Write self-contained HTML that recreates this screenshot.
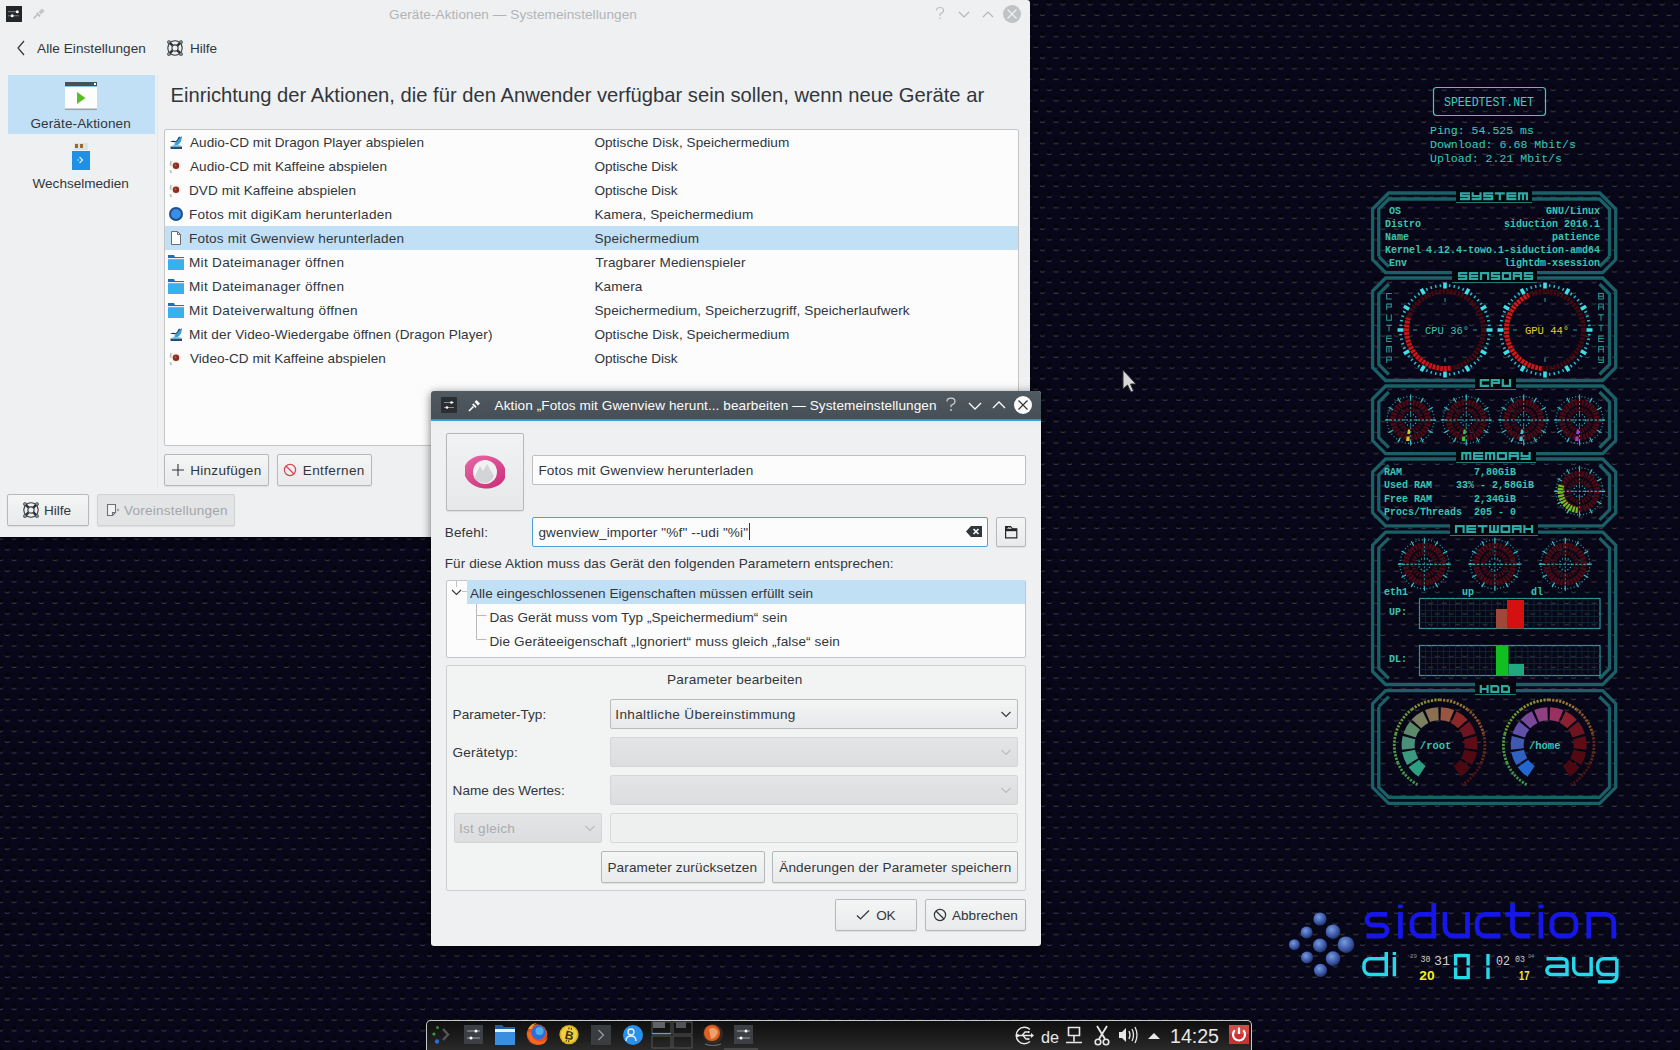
<!DOCTYPE html>
<html><head><meta charset="utf-8">
<style>
*{box-sizing:border-box;margin:0;padding:0}
html,body{width:1680px;height:1050px;overflow:hidden;background:#05051a;font-family:"Liberation Sans",sans-serif;color:#31363b}
.a{position:absolute}
.t{position:absolute;white-space:nowrap;font-size:13.57px;line-height:18px}
#bg{position:absolute;left:0;top:0}
#win{position:absolute;left:0;top:0;width:1030px;height:537px;background:#eff0f1;border-top-right-radius:3px;overflow:hidden;box-shadow:0 2px 8px rgba(0,0,0,.5)}
#dlg{position:absolute;left:431px;top:391px;width:610px;height:555px;background:#eff0f1;border-radius:3px;overflow:hidden;box-shadow:0 2px 10px rgba(0,0,0,.55)}
.btn{position:absolute;background:linear-gradient(#f4f5f5,#e9eaeb);border:1px solid #b6b8ba;border-radius:2px;box-shadow:0 1px 1px rgba(0,0,0,.08)}
.btn.dis{background:#e3e4e5;border-color:#cfd1d2}
.field{position:absolute;background:#fcfcfc;border:1px solid #bcbebf;border-radius:2px}
.combo{position:absolute;background:linear-gradient(#f3f4f4,#e8e9ea);border:1px solid #b9bbbd;border-radius:2px}
.combo.dis{background:linear-gradient(#e4e5e6,#dcddde);border-color:#d3d5d6}
.mono{font-family:"Liberation Mono",monospace}
</style></head><body>
<svg id="bg" width="1680" height="1050">
<defs>
<pattern id="pt" width="13.62" height="21.378" patternUnits="userSpaceOnUse" x="-2" y="-2.45">
<ellipse cx="2.5" cy="4.4" rx="2.7" ry="2.4" fill="#010105" opacity=".55"/>
<ellipse cx="9.31" cy="15.09" rx="2.7" ry="2.4" fill="#010105" opacity=".55"/>
<path d="M0 6.1Q2.5 7.3 5 6.1V7.1Q2.5 8.3 0 7.1Z" fill="#40404c"/>
<path d="M6.81 16.79Q9.31 17.99 11.81 16.79V17.79Q9.31 18.99 6.81 17.79Z" fill="#40404c"/>
</pattern>
</defs>
<rect width="1680" height="1050" fill="#070719"/>
<rect width="1680" height="1050" fill="url(#pt)"/>
</svg>

<!--CONKY--><svg class="a" style="left:0;top:0" width="1680" height="1050">
<rect x="1433.5" y="87.5" width="112" height="28" rx="3" fill="none" stroke="#33cfc4" stroke-width="1.2"/>
<text x="1444" y="106" font-family="Liberation Mono" font-size="12.3" fill="#3ad0c0" textLength="90" lengthAdjust="spacingAndGlyphs">SPEEDTEST.NET</text>
<text x="1430" y="133.6" font-family="Liberation Mono" font-size="11.6" fill="#36cbb9" textLength="104" lengthAdjust="spacingAndGlyphs">Ping: 54.525 ms</text>
<text x="1430" y="147.6" font-family="Liberation Mono" font-size="11.6" fill="#36cbb9" textLength="146" lengthAdjust="spacingAndGlyphs">Download: 6.68 Mbit/s</text>
<text x="1430" y="161.6" font-family="Liberation Mono" font-size="11.6" fill="#36cbb9" textLength="132" lengthAdjust="spacingAndGlyphs">Upload: 2.21 Mbit/s</text>
<path d="M1372.6 209 L1388.6 193 H1599.7 L1615.7 209 V259.6 L1602.7 272.6 H1385.6 L1372.6 259.6 Z" fill="none" stroke="#1a6066" stroke-width="3.3"/>
<path d="M1378.8 256.6 V209 L1388.8 199 H1599.5 L1609.5 209 V256.6" fill="none" stroke="#1a6066" stroke-width="3.3"/>
<path d="M1378.8 256.6 L1388.8 266.6M1609.5 256.6 L1599.5 266.6" fill="none" stroke="#1a6066" stroke-width="3.3"/>
<path d="M1372.6 291 L1385.6 278 H1602.7 L1615.7 291 V367.5 L1602.7 380.5 H1385.6 L1372.6 367.5 Z" fill="none" stroke="#1a6066" stroke-width="3.3"/>
<path d="M1388.8 284 L1378.8 294 V364.5 L1388.8 374.5M1599.5 284 L1609.5 294 V364.5 L1599.5 374.5" fill="none" stroke="#1a6066" stroke-width="3.3"/>
<path d="M1372.6 399 L1385.6 386 H1602.7 L1615.7 399 V440.6 L1602.7 453.6 H1385.6 L1372.6 440.6 Z" fill="none" stroke="#1a6066" stroke-width="3.3"/>
<path d="M1388.8 392 L1378.8 402 V437.6 L1388.8 447.6M1599.5 392 L1609.5 402 V437.6 L1599.5 447.6" fill="none" stroke="#1a6066" stroke-width="3.3"/>
<path d="M1372.6 472 L1385.6 459 H1602.7 L1615.7 472 V512.8 L1602.7 525.8 H1385.6 L1372.6 512.8 Z" fill="none" stroke="#1a6066" stroke-width="3.3"/>
<path d="M1388.8 465 L1378.8 475 V509.79999999999995 L1388.8 519.8M1599.5 465 L1609.5 475 V509.79999999999995 L1599.5 519.8" fill="none" stroke="#1a6066" stroke-width="3.3"/>
<path d="M1372.6 545.1 L1385.6 532.1 H1602.7 L1615.7 545.1 V671.5 L1602.7 684.5 H1385.6 L1372.6 671.5 Z" fill="none" stroke="#1a6066" stroke-width="3.3"/>
<path d="M1388.8 538.1 L1378.8 548.1 V668.5 L1388.8 678.5M1599.5 538.1 L1609.5 548.1 V668.5 L1599.5 678.5" fill="none" stroke="#1a6066" stroke-width="3.3"/>
<path d="M1372.6 703.7 L1385.6 690.7 H1602.7 L1615.7 703.7 V787.3 L1599.7 803.3 H1388.6 L1372.6 787.3 Z" fill="none" stroke="#1a6066" stroke-width="3.3"/>
<path d="M1378.8 706.7 V787.3 L1388.8 797.3 H1599.5 L1609.5 787.3 V706.7" fill="none" stroke="#1a6066" stroke-width="3.3"/>
<path d="M1378.8 706.7 L1388.8 696.7M1609.5 706.7 L1599.5 696.7" fill="none" stroke="#1a6066" stroke-width="3.3"/>
<rect x="1456" y="189" width="76" height="14" fill="#03070c"/>
<path d="M1456 202.5H1532" stroke="#1f7a7c" stroke-width="1"/>
<path d="M1460.0 192.2h10.0v2.2h-10.0zM1460.0 192.2h2.2v5.1h-2.2zM1460.0 195.1h10.0v2.2h-10.0zM1467.8 195.1h2.2v5.1h-2.2zM1460.0 198.0h10.0v2.2h-10.0zM1471.6 192.2h2.2v5.1h-2.2zM1479.4 192.2h2.2v8.0h-2.2zM1471.6 195.1h10.0v2.2h-10.0zM1471.6 198.0h10.0v2.2h-10.0zM1483.2 192.2h10.0v2.2h-10.0zM1483.2 192.2h2.2v5.1h-2.2zM1483.2 195.1h10.0v2.2h-10.0zM1491.0 195.1h2.2v5.1h-2.2zM1483.2 198.0h10.0v2.2h-10.0zM1494.8 192.2h10.0v2.2h-10.0zM1498.7 192.2h2.2v8.0h-2.2zM1506.4 192.2h10.0v2.2h-10.0zM1506.4 192.2h2.2v8.0h-2.2zM1506.4 195.1h10.0v2.2h-10.0zM1506.4 198.0h10.0v2.2h-10.0zM1518.0 192.2h10.0v2.2h-10.0zM1518.0 192.2h2.2v8.0h-2.2zM1521.9 192.2h2.2v8.0h-2.2zM1525.8 192.2h2.2v8.0h-2.2z" fill="#2fa8a4"/>
<rect x="1452" y="269" width="85" height="14" fill="#03070c"/>
<path d="M1452 282.5H1537" stroke="#1f7a7c" stroke-width="1"/>
<path d="M1458.0 272.0h9.3v2.2h-9.3zM1458.0 272.0h2.2v5.1h-2.2zM1458.0 274.9h9.3v2.2h-9.3zM1465.1 274.9h2.2v5.1h-2.2zM1458.0 277.8h9.3v2.2h-9.3zM1468.9 272.0h9.3v2.2h-9.3zM1468.9 272.0h2.2v8.0h-2.2zM1468.9 274.9h9.3v2.2h-9.3zM1468.9 277.8h9.3v2.2h-9.3zM1479.9 272.0h9.3v2.2h-9.3zM1479.9 272.0h2.2v8.0h-2.2zM1487.0 272.0h2.2v8.0h-2.2zM1490.8 272.0h9.3v2.2h-9.3zM1490.8 272.0h2.2v5.1h-2.2zM1490.8 274.9h9.3v2.2h-9.3zM1498.0 274.9h2.2v5.1h-2.2zM1490.8 277.8h9.3v2.2h-9.3zM1501.8 272.0h9.3v2.2h-9.3zM1501.8 272.0h2.2v8.0h-2.2zM1508.9 272.0h2.2v8.0h-2.2zM1501.8 277.8h9.3v2.2h-9.3zM1512.7 272.0h9.3v2.2h-9.3zM1512.7 272.0h2.2v8.0h-2.2zM1519.9 272.0h2.2v5.1h-2.2zM1512.7 274.9h9.3v2.2h-9.3zM1519.9 274.9h2.2v5.1h-2.2zM1523.7 272.0h9.3v2.2h-9.3zM1523.7 272.0h2.2v5.1h-2.2zM1523.7 274.9h9.3v2.2h-9.3zM1530.8 274.9h2.2v5.1h-2.2zM1523.7 277.8h9.3v2.2h-9.3z" fill="#2fa8a4"/>
<rect x="1475" y="376" width="41" height="14" fill="#03070c"/>
<path d="M1475 389.5H1516" stroke="#1f7a7c" stroke-width="1"/>
<path d="M1479.7 379.0h9.4v2.2h-9.4zM1479.7 379.0h2.2v8.0h-2.2zM1479.7 384.8h9.4v2.2h-9.4zM1490.7 379.0h9.4v2.2h-9.4zM1490.7 379.0h2.2v8.0h-2.2zM1497.9 379.0h2.2v5.1h-2.2zM1490.7 381.9h9.4v2.2h-9.4zM1501.7 379.0h2.2v8.0h-2.2zM1508.9 379.0h2.2v8.0h-2.2zM1501.7 384.8h9.4v2.2h-9.4z" fill="#2fa8a4"/>
<rect x="1456" y="449" width="80" height="14" fill="#03070c"/>
<path d="M1456 462.5H1536" stroke="#1f7a7c" stroke-width="1"/>
<path d="M1461.2 452.0h10.2v2.2h-10.2zM1461.2 452.0h2.2v8.0h-2.2zM1465.2 452.0h2.2v8.0h-2.2zM1469.2 452.0h2.2v8.0h-2.2zM1473.0 452.0h10.2v2.2h-10.2zM1473.0 452.0h2.2v8.0h-2.2zM1473.0 454.9h10.2v2.2h-10.2zM1473.0 457.8h10.2v2.2h-10.2zM1484.9 452.0h10.2v2.2h-10.2zM1484.9 452.0h2.2v8.0h-2.2zM1488.9 452.0h2.2v8.0h-2.2zM1493.0 452.0h2.2v8.0h-2.2zM1496.8 452.0h10.2v2.2h-10.2zM1496.8 452.0h2.2v8.0h-2.2zM1504.8 452.0h2.2v8.0h-2.2zM1496.8 457.8h10.2v2.2h-10.2zM1508.6 452.0h10.2v2.2h-10.2zM1508.6 452.0h2.2v8.0h-2.2zM1516.7 452.0h2.2v5.1h-2.2zM1508.6 454.9h10.2v2.2h-10.2zM1516.7 454.9h2.2v5.1h-2.2zM1520.5 452.0h2.2v5.1h-2.2zM1528.5 452.0h2.2v8.0h-2.2zM1520.5 454.9h10.2v2.2h-10.2zM1520.5 457.8h10.2v2.2h-10.2z" fill="#2fa8a4"/>
<rect x="1450" y="522" width="88" height="14" fill="#03070c"/>
<path d="M1450 535.5H1538" stroke="#1f7a7c" stroke-width="1"/>
<path d="M1454.9 525.0h9.8v2.2h-9.8zM1454.9 525.0h2.2v8.0h-2.2zM1462.5 525.0h2.2v8.0h-2.2zM1466.3 525.0h9.8v2.2h-9.8zM1466.3 525.0h2.2v8.0h-2.2zM1466.3 527.9h9.8v2.2h-9.8zM1466.3 530.8h9.8v2.2h-9.8zM1477.7 525.0h9.8v2.2h-9.8zM1481.5 525.0h2.2v8.0h-2.2zM1489.1 525.0h2.2v8.0h-2.2zM1492.9 525.0h2.2v8.0h-2.2zM1496.7 525.0h2.2v8.0h-2.2zM1489.1 530.8h9.8v2.2h-9.8zM1500.5 525.0h9.8v2.2h-9.8zM1500.5 525.0h2.2v8.0h-2.2zM1508.1 525.0h2.2v8.0h-2.2zM1500.5 530.8h9.8v2.2h-9.8zM1511.9 525.0h9.8v2.2h-9.8zM1511.9 525.0h2.2v8.0h-2.2zM1519.5 525.0h2.2v5.1h-2.2zM1511.9 527.9h9.8v2.2h-9.8zM1519.5 527.9h2.2v5.1h-2.2zM1523.3 525.0h2.2v8.0h-2.2zM1523.3 527.9h9.8v2.2h-9.8zM1530.9 525.0h2.2v5.1h-2.2zM1530.9 527.9h2.2v5.1h-2.2z" fill="#2fa8a4"/>
<rect x="1475" y="681" width="41" height="14" fill="#03070c"/>
<path d="M1475 694.5H1516" stroke="#1f7a7c" stroke-width="1"/>
<path d="M1479.7 685.0h2.2v8.0h-2.2zM1486.5 685.0h2.2v8.0h-2.2zM1479.7 687.9h9.0v2.2h-9.0zM1490.3 685.0h9.0v2.2h-9.0zM1490.3 685.0h2.2v8.0h-2.2zM1497.2 685.0h2.2v8.0h-2.2zM1490.3 690.8h9.0v2.2h-9.0zM1501.0 685.0h9.0v2.2h-9.0zM1501.0 685.0h2.2v8.0h-2.2zM1507.8 685.0h2.2v8.0h-2.2zM1501.0 690.8h9.0v2.2h-9.0z" fill="#2fa8a4"/>
<path d="M1497.2 684.8h2.4v2.4zM1507.8 684.8h2.4v2.4z" fill="#03070c"/>
<text x="1389" y="214" font-family="Liberation Mono" font-weight="bold" font-size="10" fill="#3cc4b4">OS</text>
<text x="1600" y="214" text-anchor="end" font-family="Liberation Mono" font-weight="bold" font-size="10" fill="#3cc4b4">GNU/Linux</text>
<text x="1385" y="227" font-family="Liberation Mono" font-weight="bold" font-size="10" fill="#3cc4b4">Distro</text>
<text x="1600" y="227" text-anchor="end" font-family="Liberation Mono" font-weight="bold" font-size="10" fill="#3cc4b4">siduction 2016.1</text>
<text x="1385" y="240" font-family="Liberation Mono" font-weight="bold" font-size="10" fill="#3cc4b4">Name</text>
<text x="1600" y="240" text-anchor="end" font-family="Liberation Mono" font-weight="bold" font-size="10" fill="#3cc4b4">patience</text>
<text x="1385" y="253" font-family="Liberation Mono" font-weight="bold" font-size="10" fill="#3cc4b4">Kernel</text>
<text x="1600" y="253" text-anchor="end" font-family="Liberation Mono" font-weight="bold" font-size="10" fill="#3cc4b4">4.12.4-towo.1-siduction-amd64</text>
<text x="1389" y="266" font-family="Liberation Mono" font-weight="bold" font-size="10" fill="#3cc4b4">Env</text>
<text x="1600" y="266" text-anchor="end" font-family="Liberation Mono" font-weight="bold" font-size="10" fill="#3cc4b4">lightdm-xsession</text>
<path d="M1445.0 287.0L1445.0 284.0M1449.5 287.2L1449.8 284.3M1453.9 287.9L1454.6 285.0M1458.3 289.1L1459.2 286.3M1462.5 290.7L1463.7 288.0M1466.5 292.8L1468.0 290.2M1470.3 295.2L1472.0 292.8M1473.8 298.0L1475.8 295.8M1477.0 301.2L1479.2 299.2M1479.8 304.7L1482.2 303.0M1482.2 308.5L1484.8 307.0M1484.3 312.5L1487.0 311.3M1485.9 316.7L1488.7 315.8M1487.1 321.1L1490.0 320.4M1487.8 325.5L1490.7 325.2M1488.0 330.0L1491.0 330.0M1487.8 334.5L1490.7 334.8M1487.1 338.9L1490.0 339.6M1485.9 343.3L1488.7 344.2M1484.3 347.5L1487.0 348.7M1482.2 351.5L1484.8 353.0M1479.8 355.3L1482.2 357.0M1477.0 358.8L1479.2 360.8M1473.8 362.0L1475.8 364.2M1470.3 364.8L1472.0 367.2M1466.5 367.2L1468.0 369.8M1462.5 369.3L1463.7 372.0M1458.3 370.9L1459.2 373.7M1453.9 372.1L1454.6 375.0M1449.5 372.8L1449.8 375.7M1445.0 373.0L1445.0 376.0M1440.5 372.8L1440.2 375.7M1436.1 372.1L1435.4 375.0M1431.7 370.9L1430.8 373.7M1427.5 369.3L1426.3 372.0M1423.5 367.2L1422.0 369.8M1419.7 364.8L1418.0 367.2M1416.2 362.0L1414.2 364.2M1413.0 358.8L1410.8 360.8M1410.2 355.3L1407.8 357.0M1407.8 351.5L1405.2 353.0M1405.7 347.5L1403.0 348.7M1404.1 343.3L1401.3 344.2M1402.9 338.9L1400.0 339.6M1402.2 334.5L1399.3 334.8M1402.0 330.0L1399.0 330.0M1402.2 325.5L1399.3 325.2M1402.9 321.1L1400.0 320.4M1404.1 316.7L1401.3 315.8M1405.7 312.5L1403.0 311.3M1407.8 308.5L1405.2 307.0M1410.2 304.7L1407.8 303.0M1413.0 301.2L1410.8 299.2M1416.2 298.0L1414.2 295.8M1419.7 295.2L1418.0 292.8M1423.5 292.8L1422.0 290.2M1427.5 290.7L1426.3 288.0M1431.7 289.1L1430.8 286.3M1436.1 287.9L1435.4 285.0M1440.5 287.2L1440.2 284.3" stroke="#2ab8c8" stroke-width="1.5"/>
<path d="M1445.0 288.5L1445.0 282.5M1465.8 294.1L1468.8 288.9M1480.9 309.2L1486.1 306.2M1486.5 330.0L1492.5 330.0M1480.9 350.8L1486.1 353.8M1465.8 365.9L1468.8 371.1M1445.0 371.5L1445.0 377.5M1424.2 365.9L1421.2 371.1M1409.1 350.8L1403.9 353.8M1403.5 330.0L1397.5 330.0M1409.1 309.2L1403.9 306.2M1424.2 294.1L1421.2 288.9" stroke="#3fe0e8" stroke-width="3.6"/>
<circle cx="1445" cy="330" r="38.5" fill="none" stroke="#420a10" stroke-width="5" stroke-dasharray="2.6 1.2" opacity="1"/>
<path d="M1450.4 368.1A38.5 38.5 0 0 1 1408.4 318.1" fill="none" stroke="#c81818" stroke-width="5" stroke-dasharray="2.6 1.2"/>
<path d="M1445.0 302.0L1445.0 298.0M1473.0 330.0L1477.0 330.0M1445.0 358.0L1445.0 362.0M1417.0 330.0L1413.0 330.0" stroke="#2fa0a8" stroke-width="1"/>
<text x="1447" y="334" text-anchor="middle" font-family="Liberation Mono" font-size="10.5" fill="#3cc4b4">CPU 36°</text>
<path d="M1545.0 287.0L1545.0 284.0M1549.5 287.2L1549.8 284.3M1553.9 287.9L1554.6 285.0M1558.3 289.1L1559.2 286.3M1562.5 290.7L1563.7 288.0M1566.5 292.8L1568.0 290.2M1570.3 295.2L1572.0 292.8M1573.8 298.0L1575.8 295.8M1577.0 301.2L1579.2 299.2M1579.8 304.7L1582.2 303.0M1582.2 308.5L1584.8 307.0M1584.3 312.5L1587.0 311.3M1585.9 316.7L1588.7 315.8M1587.1 321.1L1590.0 320.4M1587.8 325.5L1590.7 325.2M1588.0 330.0L1591.0 330.0M1587.8 334.5L1590.7 334.8M1587.1 338.9L1590.0 339.6M1585.9 343.3L1588.7 344.2M1584.3 347.5L1587.0 348.7M1582.2 351.5L1584.8 353.0M1579.8 355.3L1582.2 357.0M1577.0 358.8L1579.2 360.8M1573.8 362.0L1575.8 364.2M1570.3 364.8L1572.0 367.2M1566.5 367.2L1568.0 369.8M1562.5 369.3L1563.7 372.0M1558.3 370.9L1559.2 373.7M1553.9 372.1L1554.6 375.0M1549.5 372.8L1549.8 375.7M1545.0 373.0L1545.0 376.0M1540.5 372.8L1540.2 375.7M1536.1 372.1L1535.4 375.0M1531.7 370.9L1530.8 373.7M1527.5 369.3L1526.3 372.0M1523.5 367.2L1522.0 369.8M1519.7 364.8L1518.0 367.2M1516.2 362.0L1514.2 364.2M1513.0 358.8L1510.8 360.8M1510.2 355.3L1507.8 357.0M1507.8 351.5L1505.2 353.0M1505.7 347.5L1503.0 348.7M1504.1 343.3L1501.3 344.2M1502.9 338.9L1500.0 339.6M1502.2 334.5L1499.3 334.8M1502.0 330.0L1499.0 330.0M1502.2 325.5L1499.3 325.2M1502.9 321.1L1500.0 320.4M1504.1 316.7L1501.3 315.8M1505.7 312.5L1503.0 311.3M1507.8 308.5L1505.2 307.0M1510.2 304.7L1507.8 303.0M1513.0 301.2L1510.8 299.2M1516.2 298.0L1514.2 295.8M1519.7 295.2L1518.0 292.8M1523.5 292.8L1522.0 290.2M1527.5 290.7L1526.3 288.0M1531.7 289.1L1530.8 286.3M1536.1 287.9L1535.4 285.0M1540.5 287.2L1540.2 284.3" stroke="#2ab8c8" stroke-width="1.5"/>
<path d="M1545.0 288.5L1545.0 282.5M1565.8 294.1L1568.8 288.9M1580.9 309.2L1586.1 306.2M1586.5 330.0L1592.5 330.0M1580.9 350.8L1586.1 353.8M1565.8 365.9L1568.8 371.1M1545.0 371.5L1545.0 377.5M1524.2 365.9L1521.2 371.1M1509.1 350.8L1503.9 353.8M1503.5 330.0L1497.5 330.0M1509.1 309.2L1503.9 306.2M1524.2 294.1L1521.2 288.9" stroke="#3fe0e8" stroke-width="3.6"/>
<circle cx="1545" cy="330" r="38.5" fill="none" stroke="#420a10" stroke-width="5" stroke-dasharray="2.6 1.2" opacity="1"/>
<path d="M1541.6 368.4A38.5 38.5 0 0 1 1528.7 295.1" fill="none" stroke="#d81818" stroke-width="5" stroke-dasharray="2.6 1.2"/>
<path d="M1545.0 302.0L1545.0 298.0M1573.0 330.0L1577.0 330.0M1545.0 358.0L1545.0 362.0M1517.0 330.0L1513.0 330.0" stroke="#2fa0a8" stroke-width="1"/>
<text x="1547" y="334" text-anchor="middle" font-family="Liberation Mono" font-size="10.5" fill="#e8d020">GPU 44°</text>
<circle cx="1410.6" cy="420" r="23.5" fill="none" stroke="#2a9aa4" stroke-width="1.3" stroke-dasharray="1 2.2" opacity="1"/>
<path d="M1410.6 400.0L1410.6 394.5M1420.6 402.7L1423.3 397.9M1427.9 410.0L1432.7 407.2M1430.6 420.0L1436.1 420.0M1427.9 430.0L1432.7 432.8M1420.6 437.3L1423.3 442.1M1410.6 440.0L1410.6 445.5M1400.6 437.3L1397.8 442.1M1393.3 430.0L1388.5 432.8M1390.6 420.0L1385.1 420.0M1393.3 410.0L1388.5 407.2M1400.6 402.7L1397.8 397.9" stroke="#3cc0c8" stroke-width="1.2"/>
<circle cx="1410.6" cy="420" r="17.5" fill="none" stroke="#4a0a14" stroke-width="6" stroke-dasharray="2.6 0.9" opacity="1"/>
<circle cx="1410.6" cy="420" r="10.5" fill="none" stroke="#420a12" stroke-width="4.5" stroke-dasharray="2 1" opacity="1"/>
<path d="M1385.6 420H1435.6" stroke="#40c8cc" stroke-width="1.1" stroke-dasharray="2.4 1.6"/>
<path d="M1410.6 395V445" stroke="#2a9aa0" stroke-width="0.9" stroke-dasharray="2 2"/>
<circle cx="1410.6" cy="420" r="6" fill="none" stroke="#3ab8c0" stroke-width="1.3" stroke-dasharray="1 2" opacity="1"/>
<path d="M1407.1 434h3v-4.5h-2z M1406.1 441h3.5v-4.5h-3z" fill="#e0c020"/>
<circle cx="1466.3" cy="420" r="23.5" fill="none" stroke="#2a9aa4" stroke-width="1.3" stroke-dasharray="1 2.2" opacity="1"/>
<path d="M1466.3 400.0L1466.3 394.5M1476.3 402.7L1479.0 397.9M1483.6 410.0L1488.4 407.2M1486.3 420.0L1491.8 420.0M1483.6 430.0L1488.4 432.8M1476.3 437.3L1479.0 442.1M1466.3 440.0L1466.3 445.5M1456.3 437.3L1453.5 442.1M1449.0 430.0L1444.2 432.8M1446.3 420.0L1440.8 420.0M1449.0 410.0L1444.2 407.2M1456.3 402.7L1453.5 397.9" stroke="#3cc0c8" stroke-width="1.2"/>
<circle cx="1466.3" cy="420" r="17.5" fill="none" stroke="#4a0a14" stroke-width="6" stroke-dasharray="2.6 0.9" opacity="1"/>
<circle cx="1466.3" cy="420" r="10.5" fill="none" stroke="#420a12" stroke-width="4.5" stroke-dasharray="2 1" opacity="1"/>
<path d="M1441.3 420H1491.3" stroke="#40c8cc" stroke-width="1.1" stroke-dasharray="2.4 1.6"/>
<path d="M1466.3 395V445" stroke="#2a9aa0" stroke-width="0.9" stroke-dasharray="2 2"/>
<circle cx="1466.3" cy="420" r="6" fill="none" stroke="#3ab8c0" stroke-width="1.3" stroke-dasharray="1 2" opacity="1"/>
<path d="M1462.8 434h3v-4.5h-2z M1461.8 441h3.5v-4.5h-3z" fill="#40c040"/>
<circle cx="1523.7" cy="420" r="23.5" fill="none" stroke="#2a9aa4" stroke-width="1.3" stroke-dasharray="1 2.2" opacity="1"/>
<path d="M1523.7 400.0L1523.7 394.5M1533.7 402.7L1536.5 397.9M1541.0 410.0L1545.8 407.2M1543.7 420.0L1549.2 420.0M1541.0 430.0L1545.8 432.8M1533.7 437.3L1536.5 442.1M1523.7 440.0L1523.7 445.5M1513.7 437.3L1511.0 442.1M1506.4 430.0L1501.6 432.8M1503.7 420.0L1498.2 420.0M1506.4 410.0L1501.6 407.2M1513.7 402.7L1511.0 397.9" stroke="#3cc0c8" stroke-width="1.2"/>
<circle cx="1523.7" cy="420" r="17.5" fill="none" stroke="#4a0a14" stroke-width="6" stroke-dasharray="2.6 0.9" opacity="1"/>
<circle cx="1523.7" cy="420" r="10.5" fill="none" stroke="#420a12" stroke-width="4.5" stroke-dasharray="2 1" opacity="1"/>
<path d="M1498.7 420H1548.7" stroke="#40c8cc" stroke-width="1.1" stroke-dasharray="2.4 1.6"/>
<path d="M1523.7 395V445" stroke="#2a9aa0" stroke-width="0.9" stroke-dasharray="2 2"/>
<circle cx="1523.7" cy="420" r="6" fill="none" stroke="#3ab8c0" stroke-width="1.3" stroke-dasharray="1 2" opacity="1"/>
<path d="M1520.2 434h3v-4.5h-2z M1519.2 441h3.5v-4.5h-3z" fill="#40c0d0"/>
<circle cx="1579.5" cy="420" r="23.5" fill="none" stroke="#2a9aa4" stroke-width="1.3" stroke-dasharray="1 2.2" opacity="1"/>
<path d="M1579.5 400.0L1579.5 394.5M1589.5 402.7L1592.2 397.9M1596.8 410.0L1601.6 407.2M1599.5 420.0L1605.0 420.0M1596.8 430.0L1601.6 432.8M1589.5 437.3L1592.2 442.1M1579.5 440.0L1579.5 445.5M1569.5 437.3L1566.8 442.1M1562.2 430.0L1557.4 432.8M1559.5 420.0L1554.0 420.0M1562.2 410.0L1557.4 407.2M1569.5 402.7L1566.8 397.9" stroke="#3cc0c8" stroke-width="1.2"/>
<circle cx="1579.5" cy="420" r="17.5" fill="none" stroke="#4a0a14" stroke-width="6" stroke-dasharray="2.6 0.9" opacity="1"/>
<circle cx="1579.5" cy="420" r="10.5" fill="none" stroke="#420a12" stroke-width="4.5" stroke-dasharray="2 1" opacity="1"/>
<path d="M1554.5 420H1604.5" stroke="#40c8cc" stroke-width="1.1" stroke-dasharray="2.4 1.6"/>
<path d="M1579.5 395V445" stroke="#2a9aa0" stroke-width="0.9" stroke-dasharray="2 2"/>
<circle cx="1579.5" cy="420" r="6" fill="none" stroke="#3ab8c0" stroke-width="1.3" stroke-dasharray="1 2" opacity="1"/>
<path d="M1576.0 434h3v-4.5h-2z M1575.0 441h3.5v-4.5h-3z" fill="#a040d0"/>
<text x="1384" y="475.0" font-family="Liberation Mono" font-weight="bold" font-size="10" fill="#3cc4b4">RAM</text>
<text x="1474" y="475.0" font-family="Liberation Mono" font-weight="bold" font-size="10" fill="#3cc4b4">7,80GiB</text>
<text x="1384" y="488.3" font-family="Liberation Mono" font-weight="bold" font-size="10" fill="#3cc4b4">Used RAM</text>
<text x="1456" y="488.3" font-family="Liberation Mono" font-weight="bold" font-size="10" fill="#3cc4b4">33% - 2,58GiB</text>
<text x="1384" y="501.6" font-family="Liberation Mono" font-weight="bold" font-size="10" fill="#3cc4b4">Free RAM</text>
<text x="1474" y="501.6" font-family="Liberation Mono" font-weight="bold" font-size="10" fill="#3cc4b4">2,34GiB</text>
<text x="1384" y="514.9" font-family="Liberation Mono" font-weight="bold" font-size="10" fill="#3cc4b4">Procs/Threads</text>
<text x="1474" y="514.9" font-family="Liberation Mono" font-weight="bold" font-size="10" fill="#3cc4b4">205 - 0</text>
<circle cx="1579.5" cy="491.3" r="23.5" fill="none" stroke="#2a9aa4" stroke-width="1.3" stroke-dasharray="1 2.2" opacity="1"/>
<path d="M1579.5 471.3L1579.5 465.8M1589.5 474.0L1592.2 469.2M1596.8 481.3L1601.6 478.6M1599.5 491.3L1605.0 491.3M1596.8 501.3L1601.6 504.1M1589.5 508.6L1592.2 513.4M1579.5 511.3L1579.5 516.8M1569.5 508.6L1566.8 513.4M1562.2 501.3L1557.4 504.1M1559.5 491.3L1554.0 491.3M1562.2 481.3L1557.4 478.6M1569.5 474.0L1566.8 469.2" stroke="#3cc0c8" stroke-width="1.2"/>
<circle cx="1579.5" cy="491.3" r="17.5" fill="none" stroke="#4a0a14" stroke-width="6" stroke-dasharray="2.6 0.9" opacity="1"/>
<circle cx="1579.5" cy="491.3" r="10.5" fill="none" stroke="#420a12" stroke-width="4.5" stroke-dasharray="2 1" opacity="1"/>
<path d="M1554.5 491.3H1604.5" stroke="#40c8cc" stroke-width="1.1" stroke-dasharray="2.4 1.6"/>
<path d="M1579.5 466.3V516.3" stroke="#2a9aa0" stroke-width="0.9" stroke-dasharray="2 2"/>
<circle cx="1579.5" cy="491.3" r="6" fill="none" stroke="#3ab8c0" stroke-width="1.3" stroke-dasharray="1 2" opacity="1"/>
<path d="M1577.8 510.2A19 19 0 0 1 1561.6 484.8" fill="none" stroke="#70c020" stroke-width="6" stroke-dasharray="2.2 1"/>
<circle cx="1424.4" cy="564.2" r="24.5" fill="none" stroke="#2a9aa4" stroke-width="1.3" stroke-dasharray="1 2.2" opacity="1"/>
<path d="M1424.4 543.2L1424.4 537.7M1434.9 546.0L1437.7 541.3M1442.6 553.7L1447.3 551.0M1445.4 564.2L1450.9 564.2M1442.6 574.7L1447.3 577.5M1434.9 582.4L1437.7 587.1M1424.4 585.2L1424.4 590.7M1413.9 582.4L1411.2 587.1M1406.2 574.7L1401.5 577.5M1403.4 564.2L1397.9 564.2M1406.2 553.7L1401.5 551.0M1413.9 546.0L1411.2 541.3" stroke="#3cc0c8" stroke-width="1.2"/>
<circle cx="1424.4" cy="564.2" r="18.5" fill="none" stroke="#4a0a14" stroke-width="6" stroke-dasharray="2.6 0.9" opacity="1"/>
<circle cx="1424.4" cy="564.2" r="11.5" fill="none" stroke="#420a12" stroke-width="4.5" stroke-dasharray="2 1" opacity="1"/>
<path d="M1398.4 564.2H1450.4" stroke="#40c8cc" stroke-width="1.1" stroke-dasharray="2.4 1.6"/>
<path d="M1424.4 538.2V590.2" stroke="#2a9aa0" stroke-width="0.9" stroke-dasharray="2 2"/>
<circle cx="1424.4" cy="564.2" r="6" fill="none" stroke="#3ab8c0" stroke-width="1.3" stroke-dasharray="1 2" opacity="1"/>
<circle cx="1494.9" cy="564.2" r="24.5" fill="none" stroke="#2a9aa4" stroke-width="1.3" stroke-dasharray="1 2.2" opacity="1"/>
<path d="M1494.9 543.2L1494.9 537.7M1505.4 546.0L1508.2 541.3M1513.1 553.7L1517.8 551.0M1515.9 564.2L1521.4 564.2M1513.1 574.7L1517.8 577.5M1505.4 582.4L1508.2 587.1M1494.9 585.2L1494.9 590.7M1484.4 582.4L1481.7 587.1M1476.7 574.7L1472.0 577.5M1473.9 564.2L1468.4 564.2M1476.7 553.7L1472.0 551.0M1484.4 546.0L1481.7 541.3" stroke="#3cc0c8" stroke-width="1.2"/>
<circle cx="1494.9" cy="564.2" r="18.5" fill="none" stroke="#4a0a14" stroke-width="6" stroke-dasharray="2.6 0.9" opacity="1"/>
<circle cx="1494.9" cy="564.2" r="11.5" fill="none" stroke="#420a12" stroke-width="4.5" stroke-dasharray="2 1" opacity="1"/>
<path d="M1468.9 564.2H1520.9" stroke="#40c8cc" stroke-width="1.1" stroke-dasharray="2.4 1.6"/>
<path d="M1494.9 538.2V590.2" stroke="#2a9aa0" stroke-width="0.9" stroke-dasharray="2 2"/>
<circle cx="1494.9" cy="564.2" r="6" fill="none" stroke="#3ab8c0" stroke-width="1.3" stroke-dasharray="1 2" opacity="1"/>
<circle cx="1565.3" cy="564.2" r="24.5" fill="none" stroke="#2a9aa4" stroke-width="1.3" stroke-dasharray="1 2.2" opacity="1"/>
<path d="M1565.3 543.2L1565.3 537.7M1575.8 546.0L1578.5 541.3M1583.5 553.7L1588.2 551.0M1586.3 564.2L1591.8 564.2M1583.5 574.7L1588.2 577.5M1575.8 582.4L1578.5 587.1M1565.3 585.2L1565.3 590.7M1554.8 582.4L1552.0 587.1M1547.1 574.7L1542.4 577.5M1544.3 564.2L1538.8 564.2M1547.1 553.7L1542.4 551.0M1554.8 546.0L1552.0 541.3" stroke="#3cc0c8" stroke-width="1.2"/>
<circle cx="1565.3" cy="564.2" r="18.5" fill="none" stroke="#4a0a14" stroke-width="6" stroke-dasharray="2.6 0.9" opacity="1"/>
<circle cx="1565.3" cy="564.2" r="11.5" fill="none" stroke="#420a12" stroke-width="4.5" stroke-dasharray="2 1" opacity="1"/>
<path d="M1539.3 564.2H1591.3" stroke="#40c8cc" stroke-width="1.1" stroke-dasharray="2.4 1.6"/>
<path d="M1565.3 538.2V590.2" stroke="#2a9aa0" stroke-width="0.9" stroke-dasharray="2 2"/>
<circle cx="1565.3" cy="564.2" r="6" fill="none" stroke="#3ab8c0" stroke-width="1.3" stroke-dasharray="1 2" opacity="1"/>
<text x="1384" y="595" font-family="Liberation Mono" font-weight="bold" font-size="10" fill="#3cc4b4">eth1</text>
<text x="1462" y="595" font-family="Liberation Mono" font-weight="bold" font-size="10" fill="#3cc4b4">up</text>
<text x="1531" y="595" font-family="Liberation Mono" font-weight="bold" font-size="10" fill="#3cc4b4">dl</text>
<rect x="1419.5" y="598.5" width="180.5" height="30" fill="none" stroke="#2a9a9c" stroke-width="1.2"/>
<path d="M1425.5 598.5V628.5M1431.5 598.5V628.5M1437.6 598.5V628.5M1443.6 598.5V628.5M1449.6 598.5V628.5M1455.6 598.5V628.5M1461.6 598.5V628.5M1467.7 598.5V628.5M1473.7 598.5V628.5M1479.7 598.5V628.5M1485.7 598.5V628.5M1491.7 598.5V628.5M1497.8 598.5V628.5M1503.8 598.5V628.5M1509.8 598.5V628.5M1515.8 598.5V628.5M1521.8 598.5V628.5M1527.9 598.5V628.5M1533.9 598.5V628.5M1539.9 598.5V628.5M1545.9 598.5V628.5M1551.9 598.5V628.5M1558.0 598.5V628.5M1564.0 598.5V628.5M1570.0 598.5V628.5M1576.0 598.5V628.5M1582.0 598.5V628.5M1588.1 598.5V628.5M1594.1 598.5V628.5M1419.5 604.5H1600M1419.5 610.5H1600M1419.5 616.5H1600M1419.5 622.5H1600" stroke="#0f2c34" stroke-width="0.8"/>
<text x="1389" y="614.5" font-family="Liberation Mono" font-weight="bold" font-size="10" fill="#3cc4b4">UP:</text>
<rect x="1419.5" y="645.5" width="180.5" height="30" fill="none" stroke="#2a9a9c" stroke-width="1.2"/>
<path d="M1425.5 645.5V675.5M1431.5 645.5V675.5M1437.6 645.5V675.5M1443.6 645.5V675.5M1449.6 645.5V675.5M1455.6 645.5V675.5M1461.6 645.5V675.5M1467.7 645.5V675.5M1473.7 645.5V675.5M1479.7 645.5V675.5M1485.7 645.5V675.5M1491.7 645.5V675.5M1497.8 645.5V675.5M1503.8 645.5V675.5M1509.8 645.5V675.5M1515.8 645.5V675.5M1521.8 645.5V675.5M1527.9 645.5V675.5M1533.9 645.5V675.5M1539.9 645.5V675.5M1545.9 645.5V675.5M1551.9 645.5V675.5M1558.0 645.5V675.5M1564.0 645.5V675.5M1570.0 645.5V675.5M1576.0 645.5V675.5M1582.0 645.5V675.5M1588.1 645.5V675.5M1594.1 645.5V675.5M1419.5 651.5H1600M1419.5 657.5H1600M1419.5 663.5H1600M1419.5 669.5H1600" stroke="#0f2c34" stroke-width="0.8"/>
<text x="1389" y="661.5" font-family="Liberation Mono" font-weight="bold" font-size="10" fill="#3cc4b4">DL:</text>
<rect x="1496" y="609" width="11" height="19.5" fill="#a04838"/><rect x="1507" y="600" width="17" height="28.5" fill="#d41010"/>
<rect x="1496" y="646" width="12.5" height="29.5" fill="#10c020"/><rect x="1508.5" y="664" width="15.5" height="11.5" fill="#20a880"/>
<path d="M1417.6 784.8A45.3 45.3 0 0 1 1398.0 763.1" fill="none" stroke="#3a9a48" stroke-width="2.8" stroke-dasharray="2.2 1.3"/>
<path d="M1398.0 763.1A45.3 45.3 0 0 1 1395.7 733.9" fill="none" stroke="#4aa040" stroke-width="2.8" stroke-dasharray="2.2 1.3"/>
<path d="M1395.7 733.9A45.3 45.3 0 0 1 1411.9 709.4" fill="none" stroke="#6a9a38" stroke-width="2.8" stroke-dasharray="2.2 1.3"/>
<path d="M1411.9 709.4A45.3 45.3 0 0 1 1439.6 699.9" fill="none" stroke="#8a9030" stroke-width="2.8" stroke-dasharray="2.2 1.3"/>
<path d="M1439.6 699.9A45.3 45.3 0 0 1 1467.3 709.4" fill="none" stroke="#9a7a30" stroke-width="2.8" stroke-dasharray="2.2 1.3"/>
<path d="M1467.3 709.4A45.3 45.3 0 0 1 1483.5 733.9" fill="none" stroke="#8a5028" stroke-width="2.8" stroke-dasharray="2.2 1.3"/>
<path d="M1483.5 733.9A45.3 45.3 0 0 1 1481.2 763.1" fill="none" stroke="#6a2818" stroke-width="2.8" stroke-dasharray="2.2 1.3"/>
<path d="M1481.2 763.1A45.3 45.3 0 0 1 1461.6 784.8" fill="none" stroke="#501010" stroke-width="2.8" stroke-dasharray="2.2 1.3"/>
<path d="M1422.0 771.3A31.5 31.5 0 0 1 1413.9 763.4" fill="none" stroke="#2aa080" stroke-width="13"/>
<path d="M1412.7 761.6A31.5 31.5 0 0 1 1408.6 751.0" fill="none" stroke="#3a9a80" stroke-width="13"/>
<path d="M1408.3 748.9A31.5 31.5 0 0 1 1409.0 737.6" fill="none" stroke="#4a9078" stroke-width="13"/>
<path d="M1409.6 735.5A31.5 31.5 0 0 1 1415.0 725.5" fill="none" stroke="#5a8a68" stroke-width="13"/>
<path d="M1416.4 723.9A31.5 31.5 0 0 1 1425.5 717.1" fill="none" stroke="#7a8060" stroke-width="13"/>
<path d="M1427.5 716.1A31.5 31.5 0 0 1 1438.5 713.7" fill="none" stroke="#8a7050" stroke-width="13"/>
<path d="M1440.7 713.7A31.5 31.5 0 0 1 1451.7 716.1" fill="none" stroke="#9a5540" stroke-width="13"/>
<path d="M1453.7 717.1A31.5 31.5 0 0 1 1462.8 723.9" fill="none" stroke="#8a2828" stroke-width="13"/>
<path d="M1464.2 725.5A31.5 31.5 0 0 1 1469.6 735.5" fill="none" stroke="#6e1420" stroke-width="13"/>
<path d="M1470.2 737.6A31.5 31.5 0 0 1 1470.9 748.9" fill="none" stroke="#5e0c16" stroke-width="13"/>
<path d="M1470.6 751.0A31.5 31.5 0 0 1 1466.5 761.6" fill="none" stroke="#520a12" stroke-width="13"/>
<path d="M1465.3 763.4A31.5 31.5 0 0 1 1457.2 771.3" fill="none" stroke="#4a0810" stroke-width="13"/>
<text x="1435.6" y="749.2" text-anchor="middle" font-family="Liberation Mono" font-weight="bold" font-size="10.5" fill="#3cc4b4">/root</text>
<path d="M1526.7 784.8A45.3 45.3 0 0 1 1507.1 763.1" fill="none" stroke="#3a9a48" stroke-width="2.8" stroke-dasharray="2.2 1.3"/>
<path d="M1507.1 763.1A45.3 45.3 0 0 1 1504.8 733.9" fill="none" stroke="#4aa040" stroke-width="2.8" stroke-dasharray="2.2 1.3"/>
<path d="M1504.8 733.9A45.3 45.3 0 0 1 1521.0 709.4" fill="none" stroke="#6a9a38" stroke-width="2.8" stroke-dasharray="2.2 1.3"/>
<path d="M1521.0 709.4A45.3 45.3 0 0 1 1548.7 699.9" fill="none" stroke="#8a9030" stroke-width="2.8" stroke-dasharray="2.2 1.3"/>
<path d="M1548.7 699.9A45.3 45.3 0 0 1 1576.4 709.4" fill="none" stroke="#9a7a30" stroke-width="2.8" stroke-dasharray="2.2 1.3"/>
<path d="M1576.4 709.4A45.3 45.3 0 0 1 1592.6 733.9" fill="none" stroke="#8a5028" stroke-width="2.8" stroke-dasharray="2.2 1.3"/>
<path d="M1592.6 733.9A45.3 45.3 0 0 1 1590.3 763.1" fill="none" stroke="#6a2818" stroke-width="2.8" stroke-dasharray="2.2 1.3"/>
<path d="M1590.3 763.1A45.3 45.3 0 0 1 1570.7 784.8" fill="none" stroke="#501010" stroke-width="2.8" stroke-dasharray="2.2 1.3"/>
<path d="M1531.1 771.3A31.5 31.5 0 0 1 1523.0 763.4" fill="none" stroke="#2068d0" stroke-width="13"/>
<path d="M1521.8 761.6A31.5 31.5 0 0 1 1517.7 751.0" fill="none" stroke="#3060c0" stroke-width="13"/>
<path d="M1517.4 748.9A31.5 31.5 0 0 1 1518.1 737.6" fill="none" stroke="#4058b0" stroke-width="13"/>
<path d="M1518.7 735.5A31.5 31.5 0 0 1 1524.1 725.5" fill="none" stroke="#6050a8" stroke-width="13"/>
<path d="M1525.5 723.9A31.5 31.5 0 0 1 1534.6 717.1" fill="none" stroke="#7a4898" stroke-width="13"/>
<path d="M1536.6 716.1A31.5 31.5 0 0 1 1547.6 713.7" fill="none" stroke="#904080" stroke-width="13"/>
<path d="M1549.8 713.7A31.5 31.5 0 0 1 1560.8 716.1" fill="none" stroke="#9a3060" stroke-width="13"/>
<path d="M1562.8 717.1A31.5 31.5 0 0 1 1571.9 723.9" fill="none" stroke="#8a2030" stroke-width="13"/>
<path d="M1573.3 725.5A31.5 31.5 0 0 1 1578.7 735.5" fill="none" stroke="#6e1420" stroke-width="13"/>
<path d="M1579.3 737.6A31.5 31.5 0 0 1 1580.0 748.9" fill="none" stroke="#5e0c16" stroke-width="13"/>
<path d="M1579.7 751.0A31.5 31.5 0 0 1 1575.6 761.6" fill="none" stroke="#520a12" stroke-width="13"/>
<path d="M1574.4 763.4A31.5 31.5 0 0 1 1566.3 771.3" fill="none" stroke="#4a0810" stroke-width="13"/>
<text x="1544.7" y="749.2" text-anchor="middle" font-family="Liberation Mono" font-weight="bold" font-size="10.5" fill="#3cc4b4">/home</text>
<path d="M1386.2 293.0h5.6v1.0h-5.6zM1386.2 293.0h1.0v6.5h-1.0zM1386.2 298.5h5.6v1.0h-5.6z" fill="#2a9c98"/>
<path d="M1386.2 303.6h5.6v1.0h-5.6zM1386.2 303.6h1.0v6.5h-1.0zM1390.8 303.6h1.0v3.8h-1.0zM1386.2 306.4h5.6v1.0h-5.6z" fill="#2a9c98"/>
<path d="M1386.2 314.2h1.0v6.5h-1.0zM1390.8 314.2h1.0v6.5h-1.0zM1386.2 319.7h5.6v1.0h-5.6z" fill="#2a9c98"/>
<path d="M1386.2 324.8h5.6v1.0h-5.6zM1388.5 324.8h1.0v6.5h-1.0z" fill="#2a9c98"/>
<path d="M1386.2 335.4h5.6v1.0h-5.6zM1386.2 335.4h1.0v6.5h-1.0zM1386.2 338.1h5.6v1.0h-5.6zM1386.2 340.9h5.6v1.0h-5.6z" fill="#2a9c98"/>
<path d="M1386.2 346.0h5.6v1.0h-5.6zM1386.2 346.0h1.0v6.5h-1.0zM1388.5 346.0h1.0v6.5h-1.0zM1390.8 346.0h1.0v6.5h-1.0z" fill="#2a9c98"/>
<path d="M1386.2 356.6h5.6v1.0h-5.6zM1386.2 356.6h1.0v6.5h-1.0zM1390.8 356.6h1.0v3.8h-1.0zM1386.2 359.4h5.6v1.0h-5.6z" fill="#2a9c98"/>
<path d="M1598.2 293.0h5.6v1.0h-5.6zM1598.2 293.0h1.0v6.5h-1.0zM1602.8 293.0h1.0v3.8h-1.0zM1598.2 295.8h5.6v1.0h-5.6zM1602.8 295.8h1.0v3.8h-1.0zM1598.2 298.5h5.6v1.0h-5.6z" fill="#2a9c98"/>
<path d="M1598.2 303.6h5.6v1.0h-5.6zM1598.2 303.6h1.0v6.5h-1.0zM1602.8 303.6h1.0v6.5h-1.0zM1598.2 306.4h5.6v1.0h-5.6z" fill="#2a9c98"/>
<path d="M1598.2 314.2h5.6v1.0h-5.6zM1600.5 314.2h1.0v6.5h-1.0z" fill="#2a9c98"/>
<path d="M1598.2 324.8h5.6v1.0h-5.6zM1600.5 324.8h1.0v6.5h-1.0z" fill="#2a9c98"/>
<path d="M1598.2 335.4h5.6v1.0h-5.6zM1598.2 335.4h1.0v6.5h-1.0zM1598.2 338.1h5.6v1.0h-5.6zM1598.2 340.9h5.6v1.0h-5.6z" fill="#2a9c98"/>
<path d="M1598.2 346.0h5.6v1.0h-5.6zM1598.2 346.0h1.0v6.5h-1.0zM1602.8 346.0h1.0v3.8h-1.0zM1598.2 348.8h5.6v1.0h-5.6zM1602.8 348.8h1.0v3.8h-1.0z" fill="#2a9c98"/>
<path d="M1598.2 356.6h1.0v3.8h-1.0zM1602.8 356.6h1.0v6.5h-1.0zM1598.2 359.4h5.6v1.0h-5.6zM1598.2 362.1h5.6v1.0h-5.6z" fill="#2a9c98"/>

<defs><radialGradient id="ball" cx="0.4" cy="0.35" r="0.7"><stop offset="0" stop-color="#7a9ae0"/><stop offset="0.6" stop-color="#3c5aa8"/><stop offset="1" stop-color="#1c2a60"/></radialGradient></defs>
<circle cx="1320" cy="919" r="6.6" fill="url(#ball)"/>
<circle cx="1306.6" cy="932.5" r="6" fill="url(#ball)"/>
<circle cx="1333" cy="931.7" r="7.3" fill="url(#ball)"/>
<circle cx="1294.4" cy="944.7" r="5.5" fill="url(#ball)"/>
<circle cx="1320" cy="945.4" r="7" fill="url(#ball)"/>
<circle cx="1346" cy="944.7" r="8.3" fill="url(#ball)"/>
<circle cx="1307" cy="957.6" r="6" fill="url(#ball)"/>
<circle cx="1333" cy="958.6" r="7.3" fill="url(#ball)"/>
<circle cx="1320.5" cy="970.3" r="6.6" fill="url(#ball)"/>
<path d="M1387.2 914.3H1372.5A5.45 5.45 0 0 0 1372.5 925.2H1381.7A5.4 5.4 0 0 1 1381.7 936H1366.5M1400.4 911.9V938.4M1433.8 903V938.4M1433.8 914.3H1420A8 8 0 0 0 1412 922.3V928A8 8 0 0 0 1420 936H1433.8M1445 911.9V928A8 8 0 0 0 1453 936H1467.5M1467.5 911.9V938.4M1500.5 914.3H1485A8 8 0 0 0 1477.1 922.3V928A8 8 0 0 0 1485 936H1500.5M1512.5 903V928A8 8 0 0 0 1520.5 936H1530.2M1505.3 914.3H1530.2M1541 911.9V938.4M1559.9 914.3H1568A8 8 0 0 1 1576 922.3V928A8 8 0 0 1 1568 936H1559.9A8 8 0 0 1 1551.9 928V922.3A8 8 0 0 1 1559.9 914.3ZM1588.8 938.4V914.3H1605.8A8 8 0 0 1 1613.8 922.3V938.4" fill="none" stroke="#1616e8" stroke-width="4.8"/>
<rect x="1397.9" y="904.6" width="5" height="3.6" fill="#1616e8"/><rect x="1538.5" y="904.6" width="5" height="3.6" fill="#1616e8"/>
<path d="M1386.25 952V976.2M1386.25 958.65H1370A6 6 0 0 0 1364 964.65V968.45A6 6 0 0 0 1370 974.45H1386.25M1394.4 957V976.2M1546.5 958.65H1563A4 4 0 0 1 1567 962.6V976.2M1567 966.2H1551A4.1 4.1 0 0 0 1551 974.45H1567M1573.75 956.9V968.45A6 6 0 0 0 1579.75 974.45H1591.15M1591.15 956.9V976.2M1616.85 958.65H1603.75A6 6 0 0 0 1597.75 964.65V968.45A6 6 0 0 0 1603.75 974.45H1616.85M1616.85 958.65V976A5.6 5.6 0 0 1 1611.25 981.65H1598" fill="none" stroke="#26d8ea" stroke-width="3.5"/>
<rect x="1392.7" y="952" width="3.4" height="3" fill="#26d8ea"/>
<path d="M1455.6 954V965.5M1455.6 967.5V979M1468.2 954V965.5M1468.2 967.5V979M1456.5 955.5H1467.3M1456.5 977.6H1467.3M1488 954V965.5M1488 967.5V979" fill="none" stroke="#26d8ea" stroke-width="3.4"/>
<text x="1420.5" y="961.5" font-family="Liberation Mono" font-size="9" fill="#cfcfcf" textLength="10" lengthAdjust="spacingAndGlyphs">30</text>
<text x="1434" y="965" font-family="Liberation Mono" font-size="13" fill="#cfcfcf" textLength="16" lengthAdjust="spacingAndGlyphs">31</text>
<text x="1410" y="958" font-family="Liberation Mono" font-size="6" fill="#8a8a8a" textLength="7" lengthAdjust="spacingAndGlyphs">29</text>
<text x="1496" y="965" font-family="Liberation Mono" font-size="13" fill="#cfcfcf" textLength="14" lengthAdjust="spacingAndGlyphs">02</text>
<text x="1515" y="961.5" font-family="Liberation Mono" font-size="9" fill="#cfcfcf" textLength="10" lengthAdjust="spacingAndGlyphs">03</text>
<text x="1528" y="958" font-family="Liberation Mono" font-size="6" fill="#8a8a8a" textLength="6" lengthAdjust="spacingAndGlyphs">04</text>
<text x="1419.3" y="980.2" font-family="Liberation Sans" font-weight="bold" font-size="13" fill="#f0f020" textLength="15.3" lengthAdjust="spacingAndGlyphs">20</text>
<text x="1519" y="980.2" font-family="Liberation Sans" font-weight="bold" font-size="13" fill="#f0f020" textLength="10.4" lengthAdjust="spacingAndGlyphs">17</text>
<path d="M1123 370V389L1127.5 385L1131 392L1133.5 391L1130.5 384H1136Z" fill="#d8d8d8" stroke="#303030" stroke-width="1"/>

</svg><!--/CONKY-->
<!-- MAIN WINDOW -->
<div id="win">
 <!-- title bar -->
 <div class="a" style="left:6px;top:6px;width:16px;height:16px;background:#232629"></div>
 <svg class="a" style="left:6px;top:6px" width="16" height="16"><path d="M2 5.7h9M2 9.8h11" stroke="#7a8085" stroke-width="1"/><circle cx="11.3" cy="5.7" r="1.5" fill="#fff"/><circle cx="6.2" cy="9.8" r="1.5" fill="#fff"/></svg>
 <svg class="a" style="left:31px;top:6px" width="16" height="16"><path d="M2.5 12.5L6 9" stroke="#b8babc" stroke-width="1.4"/><path d="M5 7.5l3.5 3.5 1.2-1.2-3.5-3.5z" fill="#b8babc"/><path d="M7.5 6l2.5 2.5 3.5-3.5-2.5-2.5z" fill="#c4c6c8"/></svg>
 <div class="t" style="left:389.0px;top:6px;color:#b1b4b6;letter-spacing:0.078px">Geräte-Aktionen — Systemeinstellungen</div>
 <svg class="a" style="left:930px;top:4px" width="96" height="20">
  <path d="M6.5 6.5q0-3 3.5-3t3.5 3q0 2-3.5 3.5v2" stroke="#bcbec0" stroke-width="1.2" fill="none"/><circle cx="10" cy="14.5" r=".8" fill="#bcbec0"/>
  <path d="M29 8l5 5 5-5" stroke="#b4b6b8" stroke-width="1.2" fill="none"/>
  <path d="M53 13l5-5 5 5" stroke="#b4b6b8" stroke-width="1.2" fill="none"/>
  <circle cx="82" cy="10" r="9" fill="#c0c3c5"/><path d="M77.5 5.5l9 9M86.5 5.5l-9 9" stroke="#eef0f1" stroke-width="1.3"/>
 </svg>
 <!-- toolbar -->
 <svg class="a" style="left:14px;top:39px" width="14" height="18"><path d="M10 2L4 9l6 7" stroke="#31363b" stroke-width="1.2" fill="none"/></svg>
 <div class="t" style="left:37.1px;top:40px;letter-spacing:0.053px">Alle Einstellungen</div>
 <svg class="a" style="left:167px;top:40px" width="16" height="16"><circle cx="8" cy="8" r="7.2" stroke="#31363b" stroke-width="1.1" fill="none"/><circle cx="8" cy="8" r="3.1" stroke="#31363b" stroke-width="1.1" fill="none"/><path d="M2.3 2.3L5.6 5.6M13.7 2.3L10.4 5.6M2.3 13.7L5.6 10.4M13.7 13.7L10.4 10.4" stroke="#31363b" stroke-width="2.6"/><circle cx="2" cy="2" r="1.3" stroke="#31363b" stroke-width="1.1" fill="#fff"/><circle cx="14" cy="2" r="1.3" stroke="#31363b" stroke-width="1.1" fill="#fff"/><circle cx="2" cy="14" r="1.3" stroke="#31363b" stroke-width="1.1" fill="#fff"/><circle cx="14" cy="14" r="1.3" stroke="#31363b" stroke-width="1.1" fill="#fff"/></svg>
 <div class="t" style="left:190px;top:40px">Hilfe</div>
 <!-- sidebar -->
 <div class="a" style="left:8px;top:75px;width:147px;height:59px;background:#c2e0f5"></div>
 <div class="a" style="left:157px;top:75px;width:1px;height:413px;background:#e5e7e9"></div>
 <svg class="a" style="left:64px;top:80px" width="34" height="32">
  <rect x="1" y="2" width="32" height="27" fill="#fdfdfd"/>
  <rect x="1" y="2" width="32" height="4" fill="#4a5058"/><rect x="30" y="3" width="2" height="2" fill="#fff"/>
  <rect x="1" y="6" width="32" height="1" fill="#7ec8ee"/>
  <rect x="1" y="28.5" width="32" height="1.6" fill="#9aa2aa"/>
  <path d="M13 12v12l8.5-6z" fill="#56c020"/>
 </svg>
 <div class="t" style="left:30.4px;top:115px;letter-spacing:0.114px">Geräte-Aktionen</div>
 <svg class="a" style="left:70px;top:141px" width="22" height="30">
  <rect x="4" y="2" width="14" height="7" fill="#dfe2e4"/><rect x="5" y="3" width="3" height="4" fill="#9a6a30"/><rect x="10" y="3" width="3" height="4" fill="#9a6a30"/>
  <rect x="2" y="10" width="18" height="19" fill="#1e90e6"/>
  <path d="M9.5 16l3 3-3 3" stroke="#d8eefc" stroke-width="1.3" fill="none"/><circle cx="8" cy="19" r=".8" fill="#d8eefc"/>
 </svg>
 <div class="t" style="left:32.5px;top:175px;letter-spacing:0px">Wechselmedien</div>
 <!-- heading -->
 <div class="t" style="left:170.5px;top:84px;font-size:20.2px;line-height:22px">Einrichtung der Aktionen, die für den Anwender verfügbar sein sollen, wenn neue Geräte ar</div>
 <!-- list -->
 <div class="a" style="left:164px;top:129px;width:855px;height:317px;background:#fcfcfc;border:1px solid #c3c5c7;border-radius:2px"></div>
 <div class="a" style="left:165px;top:226px;width:853px;height:24px;background:#c2e0f5"></div>
 <svg class="a" style="left:168px;top:134px" width="16" height="16"><path d="M6 12q1-5 4-7t4-3q0 5-3 8t-5 2z" fill="#3aa0d0"/><path d="M2 8q3-2 5-1t3-3q1-2 3-1-2 1-3 3-2 3-5 2z" fill="#1c3450"/><path d="M2.5 12.5h11.5v2.5H2.5z" fill="#244e78"/><path d="M4 12q4-1.5 9 0" stroke="#6ad0f0" stroke-width="1" fill="none"/></svg>
 <div class="t" style="left:190.0px;top:134px;letter-spacing:0.029px">Audio-CD mit Dragon Player abspielen</div>
 <div class="t" style="left:594.4px;top:134px;letter-spacing:0.068px">Optische Disk, Speichermedium</div>
 <svg class="a" style="left:168px;top:158px" width="16" height="16"><circle cx="8" cy="7.8" r="5" fill="#f6eee9"/><circle cx="8" cy="7.8" r="3.2" fill="#8c2c22"/><circle cx="7.5" cy="7.3" r="1" fill="#c06050"/><path d="M3 3q-1 3 0 5M2.5 12q0 2 1 3" stroke="#b8bcbc" stroke-width="1.6" fill="none"/></svg>
 <div class="t" style="left:190.0px;top:158px;letter-spacing:0.04px">Audio-CD mit Kaffeine abspielen</div>
 <div class="t" style="left:594.4px;top:158px;letter-spacing:-0.04px">Optische Disk</div>
 <svg class="a" style="left:168px;top:182px" width="16" height="16"><circle cx="8" cy="7.8" r="5" fill="#f6eee9"/><circle cx="8" cy="7.8" r="3.2" fill="#8c2c22"/><circle cx="7.5" cy="7.3" r="1" fill="#c06050"/><path d="M3 3q-1 3 0 5M2.5 12q0 2 1 3" stroke="#b8bcbc" stroke-width="1.6" fill="none"/></svg>
 <div class="t" style="left:189.0px;top:182px;letter-spacing:0.056px">DVD mit Kaffeine abspielen</div>
 <div class="t" style="left:594.4px;top:182px;letter-spacing:-0.04px">Optische Disk</div>
 <svg class="a" style="left:168px;top:206px" width="16" height="16"><circle cx="8" cy="8" r="7" fill="#1d4f8a"/><circle cx="8" cy="8" r="5" fill="#3a8ee6"/></svg>
 <div class="t" style="left:189.0px;top:206px;letter-spacing:0.233px">Fotos mit digiKam herunterladen</div>
 <div class="t" style="left:594.4px;top:206px;letter-spacing:0.1px">Kamera, Speichermedium</div>
 <svg class="a" style="left:168px;top:230px" width="16" height="16"><path d="M3.5 1.5h6l3 3v10h-9z" fill="#fcfcfc" stroke="#6a6e72" stroke-width="1"/><path d="M9.5 1.5v3h3" fill="none" stroke="#6a6e72" stroke-width="1"/></svg>
 <div class="t" style="left:189.0px;top:230px;letter-spacing:0.174px">Fotos mit Gwenview herunterladen</div>
 <div class="t" style="left:594.4px;top:230px;letter-spacing:0.223px">Speichermedium</div>
 <svg class="a" style="left:168px;top:254px" width="16" height="16"><path d="M0 1h6l1 2h9v13H0z" fill="#1d71b8"/><rect x="0" y="5" width="16" height="11" fill="#3daee9"/><rect x="0" y="4" width="16" height="1.2" fill="#e8f4fb"/></svg>
 <div class="t" style="left:189.0px;top:254px;letter-spacing:0.305px">Mit Dateimanager öffnen</div>
 <div class="t" style="left:595.4px;top:254px;letter-spacing:0.127px">Tragbarer Medienspieler</div>
 <svg class="a" style="left:168px;top:278px" width="16" height="16"><path d="M0 1h6l1 2h9v13H0z" fill="#1d71b8"/><rect x="0" y="5" width="16" height="11" fill="#3daee9"/><rect x="0" y="4" width="16" height="1.2" fill="#e8f4fb"/></svg>
 <div class="t" style="left:189.0px;top:278px;letter-spacing:0.305px">Mit Dateimanager öffnen</div>
 <div class="t" style="left:594.4px;top:278px;letter-spacing:0.1px">Kamera</div>
 <svg class="a" style="left:168px;top:302px" width="16" height="16"><path d="M0 1h6l1 2h9v13H0z" fill="#1d71b8"/><rect x="0" y="5" width="16" height="11" fill="#3daee9"/><rect x="0" y="4" width="16" height="1.2" fill="#e8f4fb"/></svg>
 <div class="t" style="left:189.0px;top:302px;letter-spacing:0.332px">Mit Dateiverwaltung öffnen</div>
 <div class="t" style="left:594.4px;top:302px;letter-spacing:0.085px">Speichermedium, Speicherzugriff, Speicherlaufwerk</div>
 <svg class="a" style="left:168px;top:326px" width="16" height="16"><path d="M6 12q1-5 4-7t4-3q0 5-3 8t-5 2z" fill="#3aa0d0"/><path d="M2 8q3-2 5-1t3-3q1-2 3-1-2 1-3 3-2 3-5 2z" fill="#1c3450"/><path d="M2.5 12.5h11.5v2.5H2.5z" fill="#244e78"/><path d="M4 12q4-1.5 9 0" stroke="#6ad0f0" stroke-width="1" fill="none"/></svg>
 <div class="t" style="left:189.0px;top:326px;letter-spacing:0.117px">Mit der Video-Wiedergabe öffnen (Dragon Player)</div>
 <div class="t" style="left:594.4px;top:326px;letter-spacing:0.068px">Optische Disk, Speichermedium</div>
 <svg class="a" style="left:168px;top:350px" width="16" height="16"><circle cx="8" cy="7.8" r="5" fill="#f6eee9"/><circle cx="8" cy="7.8" r="3.2" fill="#8c2c22"/><circle cx="7.5" cy="7.3" r="1" fill="#c06050"/><path d="M3 3q-1 3 0 5M2.5 12q0 2 1 3" stroke="#b8bcbc" stroke-width="1.6" fill="none"/></svg>
 <div class="t" style="left:190.0px;top:350px;letter-spacing:0.007px">Video-CD mit Kaffeine abspielen</div>
 <div class="t" style="left:594.4px;top:350px;letter-spacing:-0.04px">Optische Disk</div>
 <!-- buttons -->
 <div class="btn" style="left:164px;top:454px;width:105px;height:32px"></div>
 <svg class="a" style="left:170px;top:462px" width="16" height="16"><path d="M8 2v12M2 8h12" stroke="#31363b" stroke-width="1.1"/></svg>
 <div class="t" style="left:190.2px;top:462px;letter-spacing:0.267px">Hinzufügen</div>
 <div class="btn" style="left:277px;top:454px;width:95px;height:32px"></div>
 <svg class="a" style="left:282px;top:462px" width="16" height="16"><circle cx="8" cy="8" r="5.6" stroke="#da4453" stroke-width="1.2" fill="none"/><path d="M4 4l8 8" stroke="#da4453" stroke-width="1.2"/></svg>
 <div class="t" style="left:302.8px;top:462px;letter-spacing:0.337px">Entfernen</div>
 <div class="btn" style="left:7px;top:494px;width:82px;height:32px"></div>
 <svg class="a" style="left:23px;top:502px" width="16" height="16"><circle cx="8" cy="8" r="7.2" stroke="#31363b" stroke-width="1.1" fill="none"/><circle cx="8" cy="8" r="3.1" stroke="#31363b" stroke-width="1.1" fill="none"/><path d="M2.3 2.3L5.6 5.6M13.7 2.3L10.4 5.6M2.3 13.7L5.6 10.4M13.7 13.7L10.4 10.4" stroke="#31363b" stroke-width="2.6"/><circle cx="2" cy="2" r="1.3" stroke="#31363b" stroke-width="1.1" fill="#fff"/><circle cx="14" cy="2" r="1.3" stroke="#31363b" stroke-width="1.1" fill="#fff"/><circle cx="2" cy="14" r="1.3" stroke="#31363b" stroke-width="1.1" fill="#fff"/><circle cx="14" cy="14" r="1.3" stroke="#31363b" stroke-width="1.1" fill="#fff"/></svg>
 <div class="t" style="left:44px;top:502px">Hilfe</div>
 <div class="btn dis" style="left:97px;top:494px;width:138px;height:32px"></div>
 <svg class="a" style="left:105px;top:502px" width="16" height="16"><path d="M2.5 2.5h8v8l-3 3h-5z" stroke="#6e7276" stroke-width="1.1" fill="#f2f2f2"/><path d="M10.5 10.5h-3v3" stroke="#6e7276" stroke-width="1.1" fill="none"/><path d="M13.5 6.5l-1.6 1.5 1.6 1.5z" fill="#6e7276"/></svg>
 <div class="t" style="left:123.9px;top:502px;color:#a3a6a9;letter-spacing:0.227px">Voreinstellungen</div>
</div>

<!-- DIALOG -->
<div id="dlg">
 <div class="a" style="left:0;top:0;width:610px;height:28px;background:linear-gradient(#525a61,#474f56)"></div>
 <div class="a" style="left:0;top:28px;width:610px;height:2px;background:linear-gradient(#2f8fc4,#3aa6dc)"></div>
 <div class="a" style="left:0;top:30px;width:610px;height:6px;background:linear-gradient(#e9ecee,#eff0f1)"></div>
 <div class="a" style="left:10px;top:6px;width:16px;height:16px;background:#2a2e32;border-radius:1px"></div>
 <svg class="a" style="left:10px;top:6px" width="16" height="16"><path d="M3 5.5h10M3 10.5h10" stroke="#8a8e92" stroke-width="1"/><circle cx="10.5" cy="5.5" r="1.3" fill="#fff"/><circle cx="6" cy="10.5" r="1.3" fill="#fff"/></svg>
 <svg class="a" style="left:35px;top:6px" width="16" height="16"><path d="M3 14l4.5-4.5" stroke="#fff" stroke-width="1.6"/><path d="M6 7.5l3.5 3.5 1-1.5-3-3z" fill="#fff"/><path d="M8.5 5l3.5 3.5 2-2-3.5-3.5z" fill="#fff"/></svg>
 <div class="t" style="left:63.6px;top:6px;color:#fcfcfc;letter-spacing:0.091px">Aktion „Fotos mit Gwenview herunt... bearbeiten — Systemeinstellungen</div>
 <svg class="a" style="left:510px;top:4px" width="100" height="20">
  <path d="M6 6.5q0-3.3 4-3.3t4 3.3q0 2.2-4 3.8v2" stroke="#d0d3d6" stroke-width="1.2" fill="none"/><circle cx="10" cy="15" r=".9" fill="#d0d3d6"/>
  <path d="M28 8l6 6 6-6" stroke="#fcfcfc" stroke-width="1.3" fill="none"/>
  <path d="M52 13l6-6 6 6" stroke="#fcfcfc" stroke-width="1.3" fill="none"/>
  <circle cx="82" cy="10" r="9" fill="#fcfcfc"/><path d="M77.5 5.5l9 9M86.5 5.5l-9 9" stroke="#31363b" stroke-width="1.2"/>
 </svg>
 <!-- icon button -->
 <div class="btn" style="left:15px;top:42px;width:78px;height:78px;background:linear-gradient(#f1f2f3,#e7e8e9)"></div>
 <svg class="a" style="left:34px;top:62px" width="40" height="36">
  <defs><linearGradient id="gw" x1="0" y1="0" x2="1" y2="1"><stop offset="0" stop-color="#e86aa8"/><stop offset="1" stop-color="#c92a76"/></linearGradient></defs>
  <ellipse cx="20" cy="19" rx="21" ry="16.5" fill="url(#gw)" transform="rotate(8 20 19)"/>
  <circle cx="20" cy="19" r="12" fill="#f1f1f2"/>
  <path d="M9 25l6-12 3 5 4-7 7 12q-3 7-9 7t-11-5z" fill="#d3d4d7"/>
 </svg>
 <div class="field" style="left:101px;top:64px;width:494px;height:30px"></div>
 <div class="t" style="left:107.4px;top:71px;letter-spacing:0.174px">Fotos mit Gwenview herunterladen</div>
 <div class="t" style="left:13.7px;top:133px;letter-spacing:0.167px">Befehl:</div>
 <div class="field" style="left:101px;top:126px;width:456px;height:30px;border-color:#4aa2d8"></div>
 <div class="t" style="left:107.4px;top:133px;letter-spacing:0.131px">gwenview_importer "%f" --udi "%i"</div>
 <div class="a" style="left:318px;top:132px;width:1px;height:17px;background:#31363b"></div>
 <svg class="a" style="left:535px;top:134px" width="17" height="13"><path d="M0 6.5L5 1h11v11H5z" fill="#31363b"/><path d="M7.5 4l5 5M12.5 4l-5 5" stroke="#fcfcfc" stroke-width="1.6"/></svg>
 <div class="btn" style="left:565px;top:126px;width:30px;height:30px"></div>
 <svg class="a" style="left:572px;top:133px" width="16" height="16"><path d="M2.6 2.6h5l2 2.2h4.2v9H2.6z" fill="none" stroke="#232629" stroke-width="1.2"/><rect x="2" y="4.8" width="11.8" height="2.4" fill="#232629"/><path d="M2.6 2.6h4.5l-1.5 2.2H2.6z" fill="#232629"/><path d="M4 4.6l2-1.6v1.6z" fill="#fff"/></svg>
 <div class="t" style="left:13.7px;top:164px;letter-spacing:0.082px">Für diese Aktion muss das Gerät den folgenden Parametern entsprechen:</div>
 <!-- tree -->
 <div class="a" style="left:15px;top:189px;width:580px;height:78px;background:#fcfcfc;border:1px solid #c3c5c7;border-radius:2px"></div>
 <div class="a" style="left:36px;top:189px;width:558px;height:24px;background:#c2e0f5"></div>
 <svg class="a" style="left:16px;top:190px" width="60" height="76">
  <path d="M5 9l4.5 4.5L14 9" stroke="#31363b" stroke-width="1.1" fill="none"/>
  <path d="M9.5 0v6M15 10.5h5" stroke="#c0c2c4" stroke-width="1"/>
  <path d="M29.5 23v35.5h10M29.5 34.5h10" stroke="#b8babc" stroke-width="1" fill="none"/>
 </svg>
 <div class="t" style="left:39.0px;top:194px;letter-spacing:0.03px">Alle eingeschlossenen Eigenschaften müssen erfüllt sein</div>
 <div class="t" style="left:58.4px;top:218px;letter-spacing:0.044px">Das Gerät muss vom Typ „Speichermedium“ sein</div>
 <div class="t" style="left:58.4px;top:242px;letter-spacing:0.132px">Die Geräteeigenschaft „Ignoriert“ muss gleich „false“ sein</div>
 <!-- param group -->
 <div class="a" style="left:15px;top:274px;width:580px;height:226px;background:#f2f3f3;border:1px solid #cdcfd1;border-radius:2px"></div>
 <div class="t" style="left:236.1px;top:280px;letter-spacing:0.205px">Parameter bearbeiten</div>
 <div class="t" style="left:21.6px;top:315px;letter-spacing:0.008px">Parameter-Typ:</div>
 <div class="t" style="left:21.6px;top:353px;letter-spacing:0.2px">Gerätetyp:</div>
 <div class="t" style="left:21.6px;top:391px;letter-spacing:0px">Name des Wertes:</div>
 <div class="combo" style="left:179px;top:308px;width:408px;height:30px"></div>
 <div class="t" style="left:184.3px;top:315px;letter-spacing:0.346px">Inhaltliche Übereinstimmung</div>
 <svg class="a" style="left:568px;top:316px" width="14" height="14"><path d="M2.5 5l4.5 4.5L11.5 5" stroke="#31363b" stroke-width="1.1" fill="none"/></svg>
 <div class="combo dis" style="left:179px;top:346px;width:408px;height:30px"></div>
 <svg class="a" style="left:568px;top:354px" width="14" height="14"><path d="M2.5 5l4.5 4.5L11.5 5" stroke="#b9bbbd" stroke-width="1.1" fill="none"/></svg>
 <div class="combo dis" style="left:179px;top:384px;width:408px;height:30px"></div>
 <svg class="a" style="left:568px;top:392px" width="14" height="14"><path d="M2.5 5l4.5 4.5L11.5 5" stroke="#b9bbbd" stroke-width="1.1" fill="none"/></svg>
 <div class="combo dis" style="left:23px;top:422px;width:148px;height:30px"></div>
 <div class="t" style="left:28.0px;top:429px;color:#a9acae;letter-spacing:0.256px">Ist gleich</div>
 <svg class="a" style="left:152px;top:430px" width="14" height="14"><path d="M2.5 5l4.5 4.5L11.5 5" stroke="#b9bbbd" stroke-width="1.1" fill="none"/></svg>
 <div class="a" style="left:179px;top:422px;width:408px;height:30px;background:#eeefef;border:1px solid #d5d7d8;border-radius:2px"></div>
 <div class="btn" style="left:170px;top:460px;width:164px;height:32px"></div>
 <div class="t" style="left:176.4px;top:468px;letter-spacing:0.129px">Parameter zurücksetzen</div>
 <div class="btn" style="left:341px;top:460px;width:246px;height:32px"></div>
 <div class="t" style="left:348.2px;top:468px;letter-spacing:0.155px">Änderungen der Parameter speichern</div>
 <!-- ok cancel -->
 <div class="btn" style="left:404px;top:508px;width:82px;height:32px"></div>
 <svg class="a" style="left:424px;top:516px" width="16" height="16"><path d="M2 8.5l3.5 3.5L14 3.5" stroke="#31363b" stroke-width="1.2" fill="none"/></svg>
 <div class="t" style="left:445.2px;top:516px;letter-spacing:-0.3px">OK</div>
 <div class="btn" style="left:494px;top:508px;width:101px;height:32px"></div>
 <svg class="a" style="left:501px;top:516px" width="16" height="16"><circle cx="8" cy="8" r="5.6" stroke="#31363b" stroke-width="1.2" fill="none"/><path d="M4 4l8 8" stroke="#31363b" stroke-width="1.2"/></svg>
 <div class="t" style="left:520.9px;top:516px;letter-spacing:0.038px">Abbrechen</div>
</div>

<!-- TASKBAR -->
<div class="a" style="left:426px;top:1020px;width:826px;height:30px;background:linear-gradient(#0f0f10,#1c1c1d 55%,#2a2a2b);border:1px solid #c8c8c8;border-bottom:none;border-radius:5px 5px 0 0"></div>
<svg class="a" style="left:426px;top:1020px" width="826" height="30">
 <circle cx="11.5" cy="7.5" r="1.5" fill="#3a8a3a"/><circle cx="8" cy="14" r="1.6" fill="#3aa040"/><circle cx="11" cy="21.5" r="2.2" fill="#2a6ad0"/><path d="M17 9l5 5.5-5 5.5" stroke="#555" stroke-width="2.4" fill="none"/>
 <rect x="38" y="5" width="19" height="19" fill="#3c4044"/><path d="M41 11h13M41 18h13" stroke="#a0a4a8" stroke-width="1"/><circle cx="50" cy="11" r="1.5" fill="#fff"/><circle cx="45" cy="18" r="1.5" fill="#fff"/>
 <path d="M69 5h7l2 2h11v18H69z" fill="#1f5fa8"/><rect x="69" y="9" width="20" height="3" fill="#e8f0f8"/><rect x="69" y="12" width="20" height="13" fill="#3a8ee0"/>
 <circle cx="111" cy="14.6" r="10.3" fill="#e8501a"/><circle cx="112.5" cy="12.5" r="7.2" fill="#2a70d8"/><circle cx="113.5" cy="11" r="4" fill="#50b0e8"/><path d="M101 12q1 10 10 12.5 9 1.5 11-8-3 6-9 5-7-1-8-9z" fill="#f06a20"/><path d="M102 9q3-6 9-6-5 2-5 6z" fill="#f5a030"/>
 <circle cx="143" cy="14.6" r="9.6" fill="#d8b020"/><circle cx="143" cy="14.6" r="8" fill="#f2d040"/><text x="139" y="19.5" font-family="Liberation Sans" font-weight="bold" font-size="12" fill="#3a3010" transform="rotate(12 143 15)">B</text><path d="M141.5 7.5v2M144 7.5v2M141.5 20v2M144 20v2" stroke="#3a3010" stroke-width="1" transform="rotate(12 143 15)"/>
 <rect x="165" y="5" width="20" height="20" fill="#3a3d40"/><path d="M172.5 10l5 5-5 5" stroke="#9a9ea2" stroke-width="1.2" fill="none"/>
 <circle cx="207" cy="15" r="10" fill="#2a90e8"/><circle cx="205" cy="12" r="3" fill="none" stroke="#e8f4fc" stroke-width="1.3"/><path d="M200 21q0-5 5-5t5 5" fill="none" stroke="#e8f4fc" stroke-width="1.3"/>
 <rect x="226" y="2" width="19" height="12" fill="none" stroke="#555" stroke-width="1"/><rect x="227" y="2" width="12" height="6" fill="#606468"/><path d="M226 13.5h19" stroke="#3daee9" stroke-width="1.2"/>
 <rect x="247" y="2" width="19" height="12" fill="none" stroke="#555" stroke-width="1"/><rect x="250" y="2" width="10" height="6" fill="#505458"/>
 <rect x="226" y="16" width="19" height="12" fill="none" stroke="#555" stroke-width="1"/>
 <rect x="247" y="16" width="19" height="12" fill="none" stroke="#555" stroke-width="1"/>
 <circle cx="287" cy="14" r="10" fill="#3a2a20"/><circle cx="286" cy="13" r="8" fill="#e06020"/><path d="M283 9q6-3 9 3-2 6-7 7z" fill="#f0a070"/><path d="M279 24q8 3 16 0" stroke="#6a6a6a" stroke-width="1.2" fill="none"/>
 <rect x="308" y="5" width="19" height="19" fill="#3c4044"/><path d="M311 11h13M311 18h13" stroke="#a0a4a8" stroke-width="1"/><circle cx="320" cy="11" r="1.5" fill="#fff"/><circle cx="315" cy="18" r="1.5" fill="#fff"/>
 <path d="M298 29h34" stroke="#666" stroke-width="1"/>
 <path d="M604 9.5A8.2 8.2 0 1 0 604 21.5" fill="none" stroke="#e8e8e8" stroke-width="1.4"/><path d="M592 15.5h13M596 15.5l3-3.5h2.5M597 15.5l3 3.5h2" stroke="#e8e8e8" stroke-width="1.3" fill="none"/><path d="M605 13l3 2.5-3 2.5z" fill="#e8e8e8"/><circle cx="591.5" cy="15.5" r="1.6" fill="#e8e8e8"/><rect x="601.5" y="11" width="2" height="2" fill="#e8e8e8"/><circle cx="602.5" cy="19" r="1.1" fill="#e8e8e8"/>
 <text x="615" y="22.5" font-family="Liberation Sans" font-size="16" fill="#e8e8e8" textLength="18" lengthAdjust="spacingAndGlyphs">de</text>
 <path d="M642.5 7.5h11v8h-11z" fill="none" stroke="#e8e8e8" stroke-width="1.6"/><path d="M648 15.5v6M640 22.5h16" stroke="#e8e8e8" stroke-width="1.6"/>
 <path d="M671 6l8 13M681 6l-8 13" stroke="#e8e8e8" stroke-width="1.8"/><circle cx="672" cy="22" r="2.8" fill="none" stroke="#e8e8e8" stroke-width="1.6"/><circle cx="680" cy="22" r="2.8" fill="none" stroke="#e8e8e8" stroke-width="1.6"/>
 <path d="M693 12h3l4-4v14l-4-4h-3z" fill="#e8e8e8"/><path d="M703 11q2 4 0 8M706 9q3 6 0 12M709 7q4 8 0 16" stroke="#e8e8e8" stroke-width="1.3" fill="none"/>
 <path d="M722 19l6-6 6 6z" fill="#e8e8e8"/>
 <text x="744" y="22.5" font-family="Liberation Sans" font-size="19.5" fill="#e8e8e8" textLength="49" lengthAdjust="spacingAndGlyphs">14:25</text>
 <rect x="803" y="5" width="20" height="19" fill="#c83232"/><rect x="803" y="5" width="20" height="9" fill="#d84a4a"/><path d="M808.8 10.2a6 6 0 1 0 8.4 0" stroke="#fff" stroke-width="2.2" fill="none"/><path d="M813 7.5v6.5" stroke="#fff" stroke-width="2.2"/>
</svg>
</body></html>
